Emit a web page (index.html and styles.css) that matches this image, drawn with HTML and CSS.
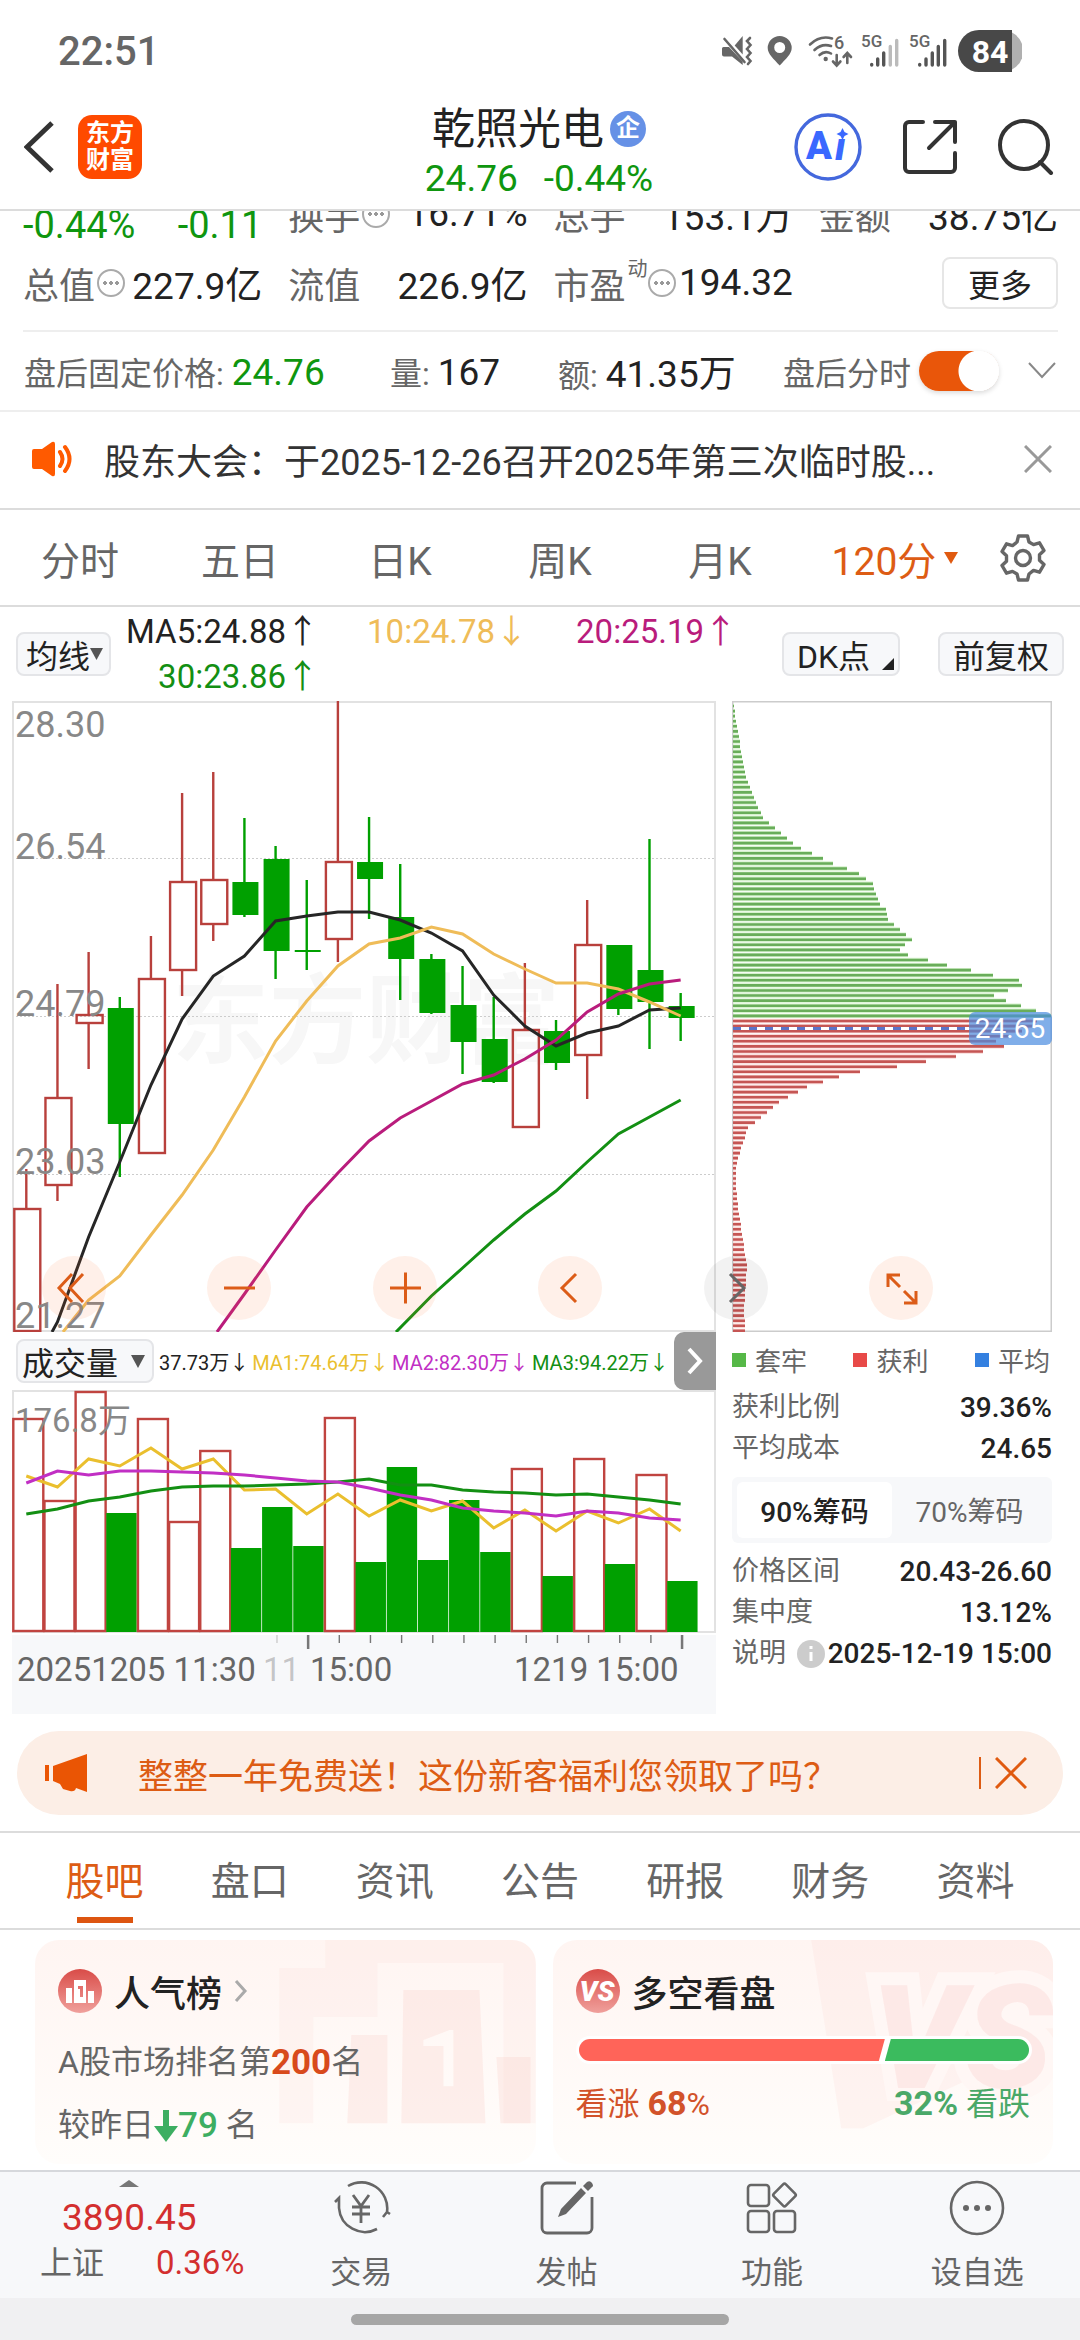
FILE: index.html
```html
<!DOCTYPE html>
<html lang="zh-CN">
<head>
<meta charset="utf-8">
<meta name="viewport" content="width=device-width, initial-scale=1">
<title>乾照光电</title>
<link rel="stylesheet" href="styles.css">
</head>
<body>
<div class="status">
  <span class="status-time">22:51</span>
  <svg class="status-icons" viewBox="0 0 302 44" aria-hidden="true">
    <g fill="#666">
      <path d="M22.700 7v18.500l-8-9z"/>
      <path d="M2 19.500q0-1.500 1.500-1.500H9l13.700 14.500V36L12 27.500H4q-2 0-2-2z"/>
      <path fill-rule="evenodd" d="M59.700 7a12 12 0 0 1 12 12c0 6-6 11-12 17.500C53.700 30 47.700 25 47.700 19a12 12 0 0 1 12-12zm0 6a5.500 5.500 0 1 0 0 11 5.500 5.500 0 0 0 0-11z"/>
      <circle cx="105.700" cy="30" r="2.200"/>
      <text x="114" y="20" font-size="18" font-weight="500">6</text>
      <text x="141" y="17.500" font-size="17" font-weight="500">5G</text>
      <text x="189" y="17.500" font-size="17" font-weight="500">5G</text>
    </g>
    <g fill="none" stroke="#666" stroke-width="2.600" stroke-linecap="round">
      <path d="M4.500 10l20 23"/>
      <path d="M30 9l-3 3 3.500 4-3.500 4 3.500 4-3.500 4 3.500 4-2.500 3"/>
      <path d="M90 15.500Q100 6 112 9.500M94.500 21Q102 14 111 17M99.500 26Q105 21 111 24.500"/>
      <path d="M116.700 26v10M113 32.500l3.700 4 3.700-4M127.300 34V24.500M123.600 28l3.700-4 3.700 4"/>
    </g>
    <g stroke="#555" stroke-width="3.400" stroke-linecap="round">
      <path d="M151.700 35.500v.5M157.700 30v6M163.700 24v12M199.700 35.500v.5M206 30v6M212.300 24v12M218.300 17.500V36M224.700 11.500V36"/>
      <path stroke="#bbb" d="M170.300 17.500V36M176.700 11.500V36"/>
    </g>
    <path fill="#484848" d="M259 1h33v42h-33a21 21 0 0 1 0-42z"/>
    <path fill="#b0b0b0" d="M292 3.500a21 21 0 0 1 0 37z"/>
    <text x="270" y="33.500" font-size="32" font-weight="700" fill="#fff" text-anchor="middle">84</text>
  </svg>
</div>

<header class="header">
  <div class="header-left">
    <button class="icon-btn" aria-label="返回">
      <svg width="32" height="54" viewBox="0 0 32 54"><path d="M28 3L3 27l25 24" fill="none" stroke="#333" stroke-width="5"/></svg>
    </button>
    <a class="logo" href="#">东方<br>财富</a>
  </div>
  <div class="title">
    <h1 class="title-name">乾照光电<span class="title-badge">企</span></h1>
    <p class="title-price"><span>24.76</span><span>-0.44%</span></p>
  </div>
  <div class="header-right">
    <button class="icon-btn" aria-label="Ai">
      <svg width="68" height="68" viewBox="0 0 68 68">
        <circle cx="34" cy="34" r="32" fill="none" stroke="#4468dd" stroke-width="3.400"/>
        <text x="12" y="46" font-size="38" font-weight="900" fill="#3a68ff">A</text>
        <text x="41" y="47" font-size="38" font-weight="900" font-style="italic" fill="#3a68ff">ı</text>
        <path fill="#3a68ff" d="M48.500 15l2 4 4 2-4 2-2 4-2-4-4-2 4-2z"/>
      </svg>
    </button>
    <button class="icon-btn" aria-label="分享">
      <svg width="56" height="56" viewBox="0 0 56 56"><path d="M21 3H7a4 4 0 0 0-4 4v42a4 4 0 0 0 4 4h42a4 4 0 0 0 4-4V34M33 3h20v20M53 3L27 29" fill="none" stroke="#333" stroke-width="4" stroke-linecap="round" stroke-linejoin="round"/></svg>
    </button>
    <button class="icon-btn" aria-label="搜索">
      <svg width="56" height="56" viewBox="0 0 56 56"><path d="M42 43l11 11" stroke="#333" stroke-width="4" stroke-linecap="round"/><circle cx="26" cy="26" r="24" fill="none" stroke="#333" stroke-width="4"/></svg>
    </button>
  </div>
</header>

<main class="main">
  <section class="quote">
    <div class="quote-grid">
      <div class="cell cell-change"><span>-0.44%</span><span>-0.11</span></div>
      <div class="cell"><span class="label">换手<i class="dots"></i></span><span>16.71%</span></div>
      <div class="cell"><span class="label">总手</span><span>153.1万</span></div>
      <div class="cell"><span class="label">金额</span><span>38.75亿</span></div>
      <div class="cell"><span class="label">总值<i class="dots"></i></span><span>227.9亿</span></div>
      <div class="cell"><span class="label">流值</span><span>226.9亿</span></div>
      <div class="cell"><span class="label">市盈<small class="label-sup">动</small><i class="dots"></i></span><span>194.32</span></div>
      <div class="cell cell-more"><button class="more">更多</button></div>
    </div>
    <div class="after">
      <span>盘后固定价格:<b class="down">24.76</b></span>
      <span>量:<b>167</b></span>
      <span>额:<b>41.35万</b></span>
      <div class="after-toggle">
        <label for="after-line">盘后分时</label>
        <input class="switch" id="after-line" type="checkbox" role="switch" checked>
        <button class="icon-btn after-open" aria-label="展开">
          <svg width="28" height="18" viewBox="0 0 28 18"><path d="M1 1l13 14L27 1" fill="none" stroke="#888" stroke-width="2"/></svg>
        </button>
      </div>
    </div>
  </section>

  <section class="notice">
    <svg width="44" height="36" viewBox="0 0 44 36" aria-hidden="true"><path fill="#ff5a00" d="M2 10q0-2 2-2h8L22 1q3-1 3 2v30q0 3-3 2l-10-7H4q-2 0-2-2z"/><path d="M30 11q5 7 0 14M35 6q9 12 0 24" fill="none" stroke="#ff5a00" stroke-width="4" stroke-linecap="round"/></svg>
    <a class="notice-text" href="#">股东大会：于2025-12-26召开2025年第三次临时股...</a>
    <button class="icon-btn" aria-label="关闭公告">
      <svg width="28" height="28" viewBox="0 0 28 28"><path d="M1 1l26 26M27 1L1 27" stroke="#999" stroke-width="3"/></svg>
    </button>
  </section>

  <nav class="periods">
    <button class="period">分时</button>
    <button class="period">五日</button>
    <button class="period">日K</button>
    <button class="period">周K</button>
    <button class="period">月K</button>
    <button class="period period-on">120分<svg width="14" height="12" viewBox="0 0 14 12"><path fill="#e05a10" d="M0 0h14L7 12z"/></svg></button>
    <button class="period period-set" aria-label="设置">
      <svg width="50" height="50" viewBox="0 0 50 50"><g fill="none" stroke="#666" stroke-width="3.400" stroke-linejoin="round"><path d="M20.500 3h9l1.500 6 4.500 2.600 6-1.800 4.500 7.700-4.500 4.300v5.400l4.500 4.300-4.500 7.700-6-1.800L31 41l-1.500 6h-9L19 41l-4.500-2.600-6 1.800L4 32.500l4.500-4.300v-5.400L4 18.500l4.500-7.700 6 1.800L19 9z"/><circle cx="25" cy="25" r="7.500"/></g></svg>
    </button>
  </nav>

  <section class="ma">
    <button class="chip">均线<svg width="13" height="12" viewBox="0 0 13 12"><path fill="#555" d="M0 0h13L6.500 12z"/></svg></button>
    <div class="ma-values">
      <span class="c-black">MA5:24.88↑</span>
      <span class="c-yellow">10:24.78↓</span>
      <span class="c-magenta">20:25.19↑</span>
      <span class="c-green">30:23.86↑</span>
    </div>
    <button class="chip chip-dk">DK点<svg width="12" height="12" viewBox="0 0 12 12"><path fill="#222" d="M12 0v12H0z"/></svg></button>
    <button class="chip">前复权</button>
  </section>

  <section class="charts">
    <div class="charts-main">
      <svg class="chart" id="candles" viewBox="12 701 704 631" role="img" aria-label="120分K线">
        <text x="172" y="1055" font-size="97" font-weight="700" fill="#f7f7f7">东方财富</text>
        <g stroke="#ccc" stroke-dasharray="2 2"><path d="M12 858.500h704M12 1016.500h704M12 1174.500h704"/></g>
        <path d="M13 702h702v629H13z" fill="none" stroke="#e2e2e2" stroke-width="2"/>
        <g id="candle-layer"></g>
        <g class="axis">
          <text x="15" y="737">28.30</text>
          <text x="15" y="859">26.54</text>
          <text x="15" y="1016">24.79</text>
          <text x="15" y="1174">23.03</text>
          <text x="15" y="1328">21.27</text>
        </g>
      </svg>
      <div class="volbar">
        <button class="chip chip-vol">成交量<svg width="14" height="13" viewBox="0 0 14 13"><path fill="#555" d="M0 0h14L7 13z"/></svg></button>
        <div class="vol-values">
          <span class="c-black">37.73万↓</span>
          <span class="c-gold">MA1:74.64万↓</span>
          <span class="c-violet">MA2:82.30万↓</span>
          <span class="c-green">MA3:94.22万↓</span>
        </div>
        <button class="vol-next" aria-label="下一指标">
          <svg width="16" height="28" viewBox="0 0 16 28"><path d="M2 2l11 12L2 26" fill="none" stroke="#fff" stroke-width="4"/></svg>
        </button>
      </div>
      <svg class="chart" id="volumes" viewBox="12 1390 704 243" role="img" aria-label="成交量">
        <path d="M13 1391h702v241H13z" fill="none" stroke="#e2e2e2" stroke-width="2"/>
        <g id="volume-layer"></g>
        <text class="axis-small" x="15" y="1432">176.8万</text>
      </svg>
      <svg class="chart timeline" viewBox="12 1635 704 79" role="img" aria-label="时间轴">
        <path fill="#f7f8fa" d="M12 1635h704v79H12z"/>
        <g id="tick-layer"></g>
        <text x="17" y="1681">20251205 11:30</text>
        <text x="263" y="1681" fill-opacity=".35">11</text>
        <text x="310" y="1681">15:00</text>
        <text x="514" y="1681">1219 15:00</text>
      </svg>
    </div>

    <div class="charts-side">
      <svg class="chart" viewBox="732 701 320 631" role="img" aria-label="筹码分布">
        <path d="M732.500 701.500h319v630h-319z" fill="none" stroke="#ccc" stroke-width="2"/>
        <g id="chip-layer"></g>
        <path d="M733 1028.500h236" stroke="#fff" stroke-width="3"/>
        <path d="M733 1028.500h236" stroke="#5a74c8" stroke-width="3" stroke-dasharray="8 8"/>
        <rect x="969" y="1012" width="83" height="33" rx="6" fill="#4a8be0" fill-opacity=".7"/>
        <text x="1010" y="1038" font-size="28" fill="#fff" text-anchor="middle">24.65</text>
      </svg>
      <ul class="legend">
        <li><i class="key key-green"></i>套牢</li>
        <li><i class="key key-red"></i>获利</li>
        <li><i class="key key-blue"></i>平均</li>
      </ul>
      <dl class="stats">
        <div><dt>获利比例</dt><dd>39.36%</dd></div>
        <div><dt>平均成本</dt><dd>24.65</dd></div>
      </dl>
      <div class="segment">
        <button class="segment-item segment-on">90%筹码</button>
        <button class="segment-item">70%筹码</button>
      </div>
      <dl class="stats">
        <div><dt>价格区间</dt><dd>20.43-26.60</dd></div>
        <div><dt>集中度</dt><dd>13.12%</dd></div>
        <div><dt>说明</dt><dd><svg width="28" height="28" viewBox="0 0 28 28" aria-hidden="true"><circle cx="14" cy="14" r="14" fill="#ccc"/><path d="M14 6v3M14 12v9" stroke="#fff" stroke-width="3"/></svg>2025-12-19 15:00</dd></div>
      </dl>
    </div>

    <div class="controls">
      <button class="control" aria-label="最左"><svg viewBox="0 0 64 64"><path d="M30 18L17 32l13 14M41 18L28 32l13 14"/></svg></button>
      <button class="control" aria-label="缩小"><svg viewBox="0 0 64 64"><path d="M17 32h31"/></svg></button>
      <button class="control" aria-label="放大"><svg viewBox="0 0 64 64"><path d="M17 32h31M32.500 16.500v31"/></svg></button>
      <button class="control" aria-label="左移"><svg viewBox="0 0 64 64"><path d="M38 18L24 32l14 14"/></svg></button>
      <button class="control control-off" aria-label="右移"><svg viewBox="0 0 64 64"><path d="M26 18l14 14-14 14"/></svg></button>
      <button class="control" aria-label="全屏"><svg viewBox="0 0 64 64"><path d="M31 19H19v12M19 19l12 12M35 47h12V35M47 47L35 35"/></svg></button>
    </div>
  </section>

  <section class="promo">
    <svg width="44" height="40" viewBox="0 0 44 40" aria-hidden="true"><path fill="#ea5504" d="M0 12h4v16H0zM8 13L42 1v38l-11-4q-1 4-6 3l-7-2-3-5-7-3z"/></svg>
    <a class="promo-text" href="#">整整一年免费送！这份新客福利您领取了吗？</a>
    <button class="promo-close" aria-label="关闭活动">
      <svg width="32" height="32" viewBox="0 0 32 32"><path d="M1 1l30 30M31 1L1 31" stroke="#e05a10" stroke-width="3"/></svg>
    </button>
  </section>

  <nav class="tabs">
    <a class="tab tab-on" href="#">股吧</a>
    <a class="tab" href="#">盘口</a>
    <a class="tab" href="#">资讯</a>
    <a class="tab" href="#">公告</a>
    <a class="tab" href="#">研报</a>
    <a class="tab" href="#">财务</a>
    <a class="tab" href="#">资料</a>
  </nav>

  <section class="cards">
    <article class="card">
      <svg class="card-art" viewBox="0 0 500 224" aria-hidden="true">
        <path fill="#fbdcd8" fill-opacity=".2" fill-rule="evenodd" d="M244 28h46V0h210v183H244zM278 183h190V23H342v54h-64z"/>
        <path fill="#f9cfcb" fill-opacity=".3" fill-rule="evenodd" d="M368 50h76l6 133h-84zM388 100l26-10h4v56h-10v-40h-20zM316 95h36v88h-40zM461 117h34v66h-30z"/>
      </svg>
      <h2 class="card-title">
        <svg width="44" height="44" viewBox="0 0 44 44" aria-hidden="true"><defs><linearGradient id="red" x2="0" y2="1"><stop stop-color="#d94c48"/><stop offset="1" stop-color="#f0a09c"/></linearGradient></defs><circle cx="22" cy="22" r="22" fill="url(#red)"/><path fill="#fff" fill-rule="evenodd" d="M16 11h12v23H16zM20 17v3h2v8h3V17zM8 19h6v15H8zM30 22h6v12h-6z"/></svg>
        人气榜
        <svg width="14" height="24" viewBox="0 0 14 24" aria-hidden="true"><path d="M2 2l9 10-9 10" fill="none" stroke="#aaa" stroke-width="3"/></svg>
      </h2>
      <p class="card-line">A股市场排名第<b class="rank">200</b>名</p>
      <p class="card-line">较昨日<svg width="24" height="32" viewBox="0 0 24 32" aria-label="下降"><path fill="#3dae62" d="M9 0h6v16h9L12 32 0 16h9z"/></svg><b class="fall">79</b> 名</p>
    </article>
    <article class="card">
      <svg class="card-art" viewBox="0 0 500 224" aria-hidden="true">
        <path fill="#fbdcd8" fill-opacity=".25" d="M258 0h242v100l-190 88h-22z"/>
        <text x="318" y="148" font-size="145" font-weight="900" font-style="italic" fill="#fad4d1" fill-opacity=".4" stroke="#fff7f5" stroke-width="26" paint-order="stroke">VS</text>
      </svg>
      <h2 class="card-title">
        <svg width="44" height="44" viewBox="0 0 44 44" aria-hidden="true"><circle cx="22" cy="22" r="22" fill="url(#red)"/><text x="21" y="32" font-size="28" font-weight="900" font-style="italic" fill="#fff" text-anchor="middle">VS</text></svg>
        多空看盘
      </h2>
      <div class="poll"><div class="poll-up" style="width:68%"></div><div class="poll-down"></div></div>
      <p class="poll-text"><span class="poll-rise">看涨 <b>68</b>%</span><span class="poll-fall"><b>32%</b> 看跌</span></p>
    </article>
  </section>
</main>

<nav class="dock">
  <a class="index" href="#">
    <svg width="20" height="7" viewBox="0 0 20 7" aria-hidden="true"><path fill="#777" d="M10 0l10 7H0z"/></svg>
    <span class="index-value">3890.45</span>
    <span class="index-row"><span class="index-name">上证</span><span>0.36%</span></span>
  </a>
  <a class="dock-item" href="#">
    <svg width="60" height="56" viewBox="0 0 60 56" aria-hidden="true"><g fill="none" stroke="#666" stroke-width="2.600"><path d="M17 6A26 26 0 0 1 56 32l-4 5M4 22l4-4v10A26 26 0 0 0 46 49M56 32l3 2"/></g><path d="M22 15l8 11 8-11M21 27h18M21 34h18M30 26v17" fill="none" stroke="#666" stroke-width="2.800"/></svg>
    交易
  </a>
  <a class="dock-item" href="#">
    <svg width="56" height="56" viewBox="0 0 56 56" aria-hidden="true"><path d="M37 3H8a5 5 0 0 0-5 5v40a5 5 0 0 0 5 5h40a5 5 0 0 0 5-5V17" fill="none" stroke="#666" stroke-width="2.800"/><path fill="#666" d="M42 8l5 5-20 21-8 3 3-8zM44 6l4-4q3-2 5 1t0 4l-4 4z"/></svg>
    发帖
  </a>
  <a class="dock-item" href="#">
    <svg width="56" height="56" viewBox="0 0 56 56" aria-hidden="true"><g fill="none" stroke="#666" stroke-width="2.600"><rect x="4" y="5" width="21" height="21" rx="3"/><rect x="4" y="31" width="21" height="21" rx="3"/><rect x="30" y="31" width="21" height="21" rx="3"/><rect x="32" y="6.500" width="17" height="17" rx="2" transform="rotate(45 40.500 15)"/></g></svg>
    功能
  </a>
  <a class="dock-item" href="#">
    <svg width="56" height="56" viewBox="0 0 56 56" aria-hidden="true"><circle cx="28" cy="28" r="26" fill="none" stroke="#666" stroke-width="2.600"/><g fill="#666"><circle cx="17" cy="28" r="3"/><circle cx="28" cy="28" r="3"/><circle cx="39" cy="28" r="3"/></g></svg>
    设自选
  </a>
</nav>
<div class="gesture"><span class="gesture-bar"></span></div>
<script src="script.js"></script>
</body>
</html>
```

FILE: styles.css
```css
* { box-sizing: border-box; }

body {
  margin: 0;
  min-height: 100vh;
  display: flex;
  flex-direction: column;
  background: #fff;
  color: #222;
  font-family: Roboto, "Noto Sans CJK SC", sans-serif;
  font-size: 36px;
}

h1, h2, p, ul, dl, dd { margin: 0; padding: 0; }
ul { list-style: none; }
a { color: inherit; text-decoration: none; }
svg { display: block; flex: none; }
button {
  padding: 0;
  border: 0;
  background: none;
  color: inherit;
  font: inherit;
}

.icon-btn { display: flex; }

.c-black { color: #222; }
.c-yellow { color: #efbc58; }
.c-magenta { color: #b91c7c; }
.c-green { color: #138f13; }
.c-gold { color: #eabf2e; }
.c-violet { color: #c12fc4; }

/* status bar */
.status {
  height: 84px;
  padding: 18px 58px 0;
  display: flex;
  align-items: center;
  justify-content: space-between;
}
.status-time { font-size: 40px; font-weight: 500; color: #666; }
.status-icons { width: 302px; height: 44px; }

/* header */
.header {
  height: 127px;
  padding: 0 26px 0 24px;
  display: grid;
  grid-template-columns: 1fr auto 1fr;
  align-items: center;
  border-bottom: 2px solid #dcdcdc;
}
.header-left { display: flex; align-items: center; gap: 22px; }
.logo {
  width: 64px;
  height: 64px;
  padding-top: 5px;
  border-radius: 14px;
  background: #ff4a00;
  color: #fff;
  font-size: 24px;
  font-weight: 700;
  line-height: 27px;
  text-align: center;
}
.title { padding-top: 12px; }
.title-name {
  display: flex;
  align-items: center;
  justify-content: center;
  gap: 6px;
  font-size: 43px;
  font-weight: 400;
  line-height: 52px;
}
.title-badge {
  width: 36px;
  height: 36px;
  border-radius: 50%;
  background: #6691e6;
  color: #fff;
  font-size: 24px;
  font-weight: 700;
  line-height: 34px;
  text-align: center;
}
.title-price {
  display: flex;
  justify-content: center;
  gap: 26px;
  color: #0f960f;
  font-size: 37px;
  line-height: 48px;
}
.header-right { display: flex; align-items: center; justify-content: flex-end; gap: 40px; }

.main { flex: 1; }

/* quote numbers */
.quote { overflow: hidden; border-bottom: 2px solid #eee; }
.quote-grid {
  margin: -32px 22px 0 23px;
  padding-bottom: 13px;
  display: grid;
  grid-template-columns: repeat(4, 1fr);
  column-gap: 26px;
  border-bottom: 2px solid #eee;
}
.cell {
  height: 69px;
  display: flex;
  align-items: center;
  justify-content: space-between;
  font-size: 37px;
  white-space: nowrap;
}
.cell-change { padding-top: 22px; color: #0f960f; font-size: 38px; }
.cell-more { justify-content: flex-end; }
.label { display: flex; align-items: center; gap: 2px; color: #666; font-size: 36px; }
.label-sup { align-self: flex-start; margin-right: -2px; font-size: 20px; line-height: 24px; }
.dots {
  width: 28px;
  height: 28px;
  border: 2px solid #aaa;
  border-radius: 50%;
  background:
    radial-gradient(circle at 6px 12px, #999 2px, transparent 2px),
    radial-gradient(circle at 12px 12px, #999 2px, transparent 2px),
    radial-gradient(circle at 18px 12px, #999 2px, transparent 2px);
}
.more {
  width: 116px;
  height: 52px;
  border: 2px solid #e6e6e6;
  border-radius: 8px;
  font-size: 32px;
}
.after {
  height: 78px;
  padding: 0 24px;
  display: grid;
  grid-template-columns: 366fr 168fr 225fr 273fr;
  align-items: center;
  color: #666;
  font-size: 32px;
  white-space: nowrap;
}
.after b { margin-left: 8px; color: #222; font-size: 37px; font-weight: 400; }
.after .down { color: #0f960f; }
.after-toggle { display: flex; align-items: center; }
.switch {
  appearance: none;
  width: 80px;
  height: 40px;
  margin: 0 0 0 8px;
  border-radius: 20px;
  background: radial-gradient(circle at 60px 20px, #fff 20px, #e9560a 21px);
  box-shadow: 0 2px 5px rgba(0, 0, 0, .15);
}
.after-open { margin-left: auto; }

/* announcement */
.notice {
  height: 98px;
  padding: 0 28px 2px 30px;
  display: flex;
  align-items: center;
  border-bottom: 2px solid #dcdcdc;
}
.notice-text { flex: 1; margin-left: 30px; color: #333; white-space: nowrap; }

/* chart periods */
.periods {
  height: 97px;
  display: grid;
  grid-template-columns: repeat(5, 160fr) 190fr 90fr;
  border-bottom: 2px solid #dcdcdc;
  color: #666;
  font-size: 39px;
}
.period { display: flex; align-items: center; justify-content: center; gap: 8px; }
.period-on { color: #dd5c14; }
.period-set { justify-content: flex-start; padding-left: 8px; }

/* moving average row */
.ma {
  height: 94px;
  padding: 0 16px;
  display: flex;
  align-items: center;
}
.chip {
  height: 44px;
  padding: 0 13px;
  display: flex;
  align-items: center;
  border: 2px solid #e4e5e8;
  border-radius: 8px;
  background: #f7f8fa;
  color: #222;
  font-size: 32px;
  white-space: nowrap;
}
.ma .chip:first-child { padding: 0 6px 0 8px; }
.ma-values {
  margin: 0 auto 0 15px;
  display: grid;
  grid-template-columns: repeat(3, auto);
  column-gap: 48px;
  font-size: 33px;
  line-height: 45px;
  text-align: right;
  white-space: nowrap;
}
.chip-dk { margin-right: 38px; padding-right: 4px; gap: 12px; }
.chip-dk svg { align-self: flex-end; margin-bottom: 4px; }

/* charts */
.charts {
  position: relative;
  padding: 0 28px 0 12px;
  display: grid;
  grid-template-columns: minmax(0, 704fr) minmax(0, 320fr);
  column-gap: 16px;
}
.chart { width: 100%; height: auto; }
.axis { fill: #888; font-size: 36px; }
.axis-small { fill: #888; font-size: 33px; }
.timeline { margin-top: 2px; fill: #666; font-size: 33px; }
.volbar { height: 58px; display: flex; align-items: center; }
.chip-vol { flex: none; margin-left: 4px; padding: 0 7px 0 4px; gap: 13px; }
.vol-values {
  flex: 1;
  padding: 0 5px;
  display: flex;
  justify-content: space-between;
  font-size: 20px;
  white-space: nowrap;
}
.vol-next {
  width: 42px;
  height: 58px;
  display: flex;
  align-items: center;
  justify-content: center;
  border-radius: 10px 0 0 10px;
  background: #999;
}
.controls {
  position: absolute;
  top: 555px;
  left: 42px;
  right: 147px;
  display: flex;
  justify-content: space-between;
}
.control {
  width: 64px;
  height: 64px;
  border-radius: 50%;
  background: rgba(255, 110, 40, .1);
}
.control svg { fill: none; stroke: #dc5c18; stroke-width: 3; }
.control-off { background: rgba(0, 0, 0, .05); }
.control-off svg { stroke: #666; }

.legend {
  height: 55px;
  padding-right: 2px;
  display: flex;
  align-items: center;
  justify-content: space-between;
  color: #666;
  font-size: 26px;
}
.legend li { display: flex; align-items: center; gap: 9px; }
.key { width: 14px; height: 14px; }
.key-green { background: #56b847; }
.key-red { background: #e84a48; }
.key-blue { background: #3480e0; }
.stats div {
  display: flex;
  align-items: center;
  justify-content: space-between;
  line-height: 41px;
  white-space: nowrap;
}
.stats dt { color: #666; font-size: 27px; }
.stats dd { display: flex; align-items: center; gap: 3px; font-size: 28px; font-weight: 500; }
.segment {
  height: 66px;
  margin: 8px 0;
  padding: 5px;
  display: grid;
  grid-template-columns: 1fr 1fr;
  border-radius: 6px;
  background: #f7f8fa;
}
.segment-item { border-radius: 6px; color: #666; font-size: 28px; }
.segment-on { background: #fff; color: #222; font-weight: 500; }

/* promotion */
.promo {
  height: 84px;
  margin: 17px 17px 16px;
  padding: 0 36px 0 28px;
  display: flex;
  align-items: center;
  border-radius: 42px;
  background: #fceee6;
  color: #dd5c14;
}
.promo-text { flex: 1; margin-left: 49px; font-size: 35px; white-space: nowrap; }
.promo-close { padding-left: 14px; border-left: 2px solid #dd5c14; }

/* section tabs */
.tabs {
  height: 99px;
  padding: 0 32px;
  display: grid;
  grid-template-columns: repeat(7, 1fr);
  justify-items: center;
  border-top: 2px solid #dcdcdc;
  border-bottom: 2px solid #dcdcdc;
  color: #666;
  font-size: 39px;
  line-height: 98px;
}
.tab-on {
  background: linear-gradient(#dd5510, #dd5510) center bottom 8px / 56px 6px no-repeat;
  color: #dd5c14;
}

/* cards */
.cards {
  padding: 10px 27px 6px 35px;
  display: grid;
  grid-template-columns: 1fr 1fr;
  gap: 17px;
}
.card {
  position: relative;
  height: 224px;
  padding: 24px 23px 0;
  overflow: hidden;
  border-radius: 24px;
  background: linear-gradient(#fff5f2, #fffdfb);
}
.card > * { position: relative; }
.card .card-art { position: absolute; top: 0; left: 0; width: 100%; }
.card-title {
  height: 54px;
  margin-bottom: 13px;
  display: flex;
  align-items: center;
  gap: 12px;
  font-size: 36px;
  font-weight: 500;
}
.card-line { display: flex; align-items: center; color: #666; font-size: 32px; line-height: 63px; white-space: pre; }
.card-line b { font-size: 35px; }
.rank { color: #d84a1c; }
.fall { color: #3dae62; font-weight: 500; }
.poll {
  margin: 21px 1px 17px 3px;
  display: flex;
  height: 22px;
  border-radius: 11px;
  overflow: hidden;
  outline: 3px solid #fff;
  background: #fff;
}
.poll-up { background: #ff6459; clip-path: polygon(0 0, 100% 0, calc(100% - 6px) 100%, 0 100%); }
.poll-down { flex: 1; background: #3bbb5e; clip-path: polygon(6px 0, 100% 0, 100% 100%, 0 100%); }
.poll-text { display: flex; justify-content: space-between; font-size: 32px; line-height: 50px; }
.poll-text b { font-size: 34px; }
.poll-rise { color: #d2522a; }
.poll-fall { color: #4aa868; }

/* bottom dock */
.dock {
  height: 128px;
  display: grid;
  grid-template-columns: 258fr repeat(4, 205fr);
  border-top: 2px solid #d6d8dc;
  background: #f7f8fa;
  color: #666;
  font-size: 31px;
}
.dock-item {
  padding-top: 8px;
  display: flex;
  flex-direction: column;
  align-items: center;
  gap: 15px;
  line-height: 44px;
}
.index {
  padding-top: 8px;
  display: flex;
  flex-direction: column;
  align-items: center;
  color: #d32f2f;
}
.index-value { margin-top: 6px; font-size: 37px; line-height: 50px; }
.index-row { width: 100%; padding: 0 14px 0 40px; display: flex; justify-content: space-between; font-size: 33px; line-height: 40px; }
.index-name { color: #666; font-size: 32px; }
.gesture {
  height: 42px;
  display: flex;
  align-items: center;
  justify-content: center;
  background: #f0f0f2;
}
.gesture-bar { width: 35%; height: 11px; border-radius: 6px; background: #a6a6a6; }
```

FILE: script.js
```js
const NS = 'http://www.w3.org/2000/svg';
const RED = '#b8403c';
const GREEN = '#00a000';
const STEP = 31.16;
const slot = i => 26.3 + STEP * i;

function add(parent, tag, attrs) {
  const el = document.createElementNS(NS, tag);
  for (const key in attrs) el.setAttribute(key, attrs[key]);
  parent.appendChild(el);
}

function line(parent, color, start, first, ys) {
  const points = ys.map((y, i) => `${slot(first + i)},${y}`);
  if (start) points.unshift(start);
  add(parent, 'polyline', { points: points.join(' '), fill: 'none', stroke: color, 'stroke-width': 3 });
}

// colour, high, body top, body bottom, low
const candles = [
  ['r', 1169, 1209, 1331, 1331], ['r', 984, 1098, 1185, 1201], ['r', 952, 1015, 1023, 1069],
  ['g', 997, 1008, 1124, 1177], ['r', 936, 979, 1153, 1153], ['r', 793, 882, 970, 996],
  ['r', 772, 880, 924, 941], ['g', 818, 882, 915, 917], ['g', 846, 859, 951, 979],
  ['g', 880, 950, 952, 970], ['r', 701, 862, 939, 962], ['g', 817, 862, 879, 919],
  ['g', 864, 917, 959, 1000], ['g', 954, 959, 1013, 1014], ['g', 966, 1005, 1042, 1074],
  ['g', 997, 1039, 1082, 1083], ['r', 963, 1030, 1127, 1127], ['g', 1020, 1031, 1063, 1070],
  ['r', 900, 945, 1055, 1099], ['g', 945, 945, 1009, 1015], ['g', 839, 970, 1002, 1049],
  ['g', 993, 1006, 1018, 1041]
];
const candleLayer = document.getElementById('candle-layer');
candles.forEach(([side, high, top, bottom, low], i) => {
  const x = slot(i);
  const color = side === 'r' ? RED : GREEN;
  add(candleLayer, 'path', { d: `M${x} ${high}V${top}M${x} ${bottom}V${low}`, stroke: color, 'stroke-width': 2.4 });
  add(candleLayer, 'rect', side === 'r'
    ? { x: x - 12, y: top, width: 26, height: bottom - top, fill: 'none', stroke: color, 'stroke-width': 2.4 }
    : { x: x - 12, y: top, width: 26, height: bottom - top, fill: color });
});
line(candleLayer, '#262626', '52,1332', 1, [1322, 1237, 1162, 1085, 1019, 976, 956, 921, 916, 912, 912, 920, 933, 951, 995, 1026, 1046, 1033, 1026, 1010, 1008]);
line(candleLayer, '#efbc58', '63,1332', 2, [1300, 1276, 1235, 1195, 1150, 1097, 1041, 1001, 966, 944, 938, 927, 934, 954, 969, 983, 983, 989, 1002, 1016]);
line(candleLayer, '#b91c7c', '217,1332', 7, [1294, 1250, 1207, 1173, 1141, 1118, 1101, 1084, 1075, 1059, 1040, 1012, 994, 984, 980]);
line(candleLayer, '#138f13', '396,1332', 13, [1296, 1268, 1240, 1214, 1191, 1162, 1134, 1117, 1100]);

const volumes = [
  ['r', 1419], ['r', 1501], ['r', 1392], ['g', 1513], ['r', 1419], ['r', 1522], ['r', 1451], ['g', 1548],
  ['g', 1507], ['g', 1546], ['r', 1418], ['g', 1562], ['g', 1467], ['g', 1560], ['g', 1500], ['g', 1552],
  ['r', 1469], ['g', 1576], ['r', 1459], ['g', 1564], ['r', 1475], ['g', 1581]
];
const volumeLayer = document.getElementById('volume-layer');
volumes.forEach(([side, top], i) => {
  const x = slot(i) - 13.5;
  add(volumeLayer, 'rect', side === 'r'
    ? { x: x + 0.5, y: top, width: 30, height: 1631 - top, fill: 'none', stroke: '#c04440', 'stroke-width': 2.4 }
    : { x, y: top, width: 30.4, height: 1632 - top, fill: GREEN });
});
line(volumeLayer, '#eabf2e', '', 0, [1476, 1487, 1459, 1466, 1448, 1469, 1459, 1490, 1489, 1514, 1494, 1516, 1500, 1511, 1501, 1528, 1510, 1531, 1511, 1523, 1509, 1531]);
line(volumeLayer, '#138f13', '', 0, [1514, 1509, 1501, 1497, 1491, 1487, 1486, 1486, 1485, 1484, 1482, 1479, 1485, 1485, 1490, 1492, 1493, 1495, 1494, 1497, 1500, 1504]);
line(volumeLayer, '#c12fc4', '', 0, [1483, 1471, 1475, 1471, 1471, 1472, 1473, 1475, 1478, 1481, 1482, 1488, 1495, 1500, 1508, 1511, 1513, 1516, 1511, 1513, 1518, 1520]);

const tickLayer = document.getElementById('tick-layer');
for (let i = 8; i < 22; i++) {
  const major = i === 9 || i === 21;
  const x = slot(i) + 1.4;
  add(tickLayer, 'path', { d: `M${x} 1635v${major ? 14 : 8}`, stroke: i === 8 ? '#ccc' : '#777', 'stroke-width': major ? 2.5 : 1.4 });
}

// cost distribution, one bar per price level
const trapped = [1, 2, 2, 3, 4, 5, 6, 7, 7, 8, 9, 10, 11, 12, 13, 15, 17, 19, 21, 23, 25, 28, 30, 36, 42, 48, 54, 60, 68, 79, 90, 100, 114, 126, 133, 140, 141, 143, 145, 147, 153, 154, 155, 161, 167, 173, 179, 172, 167, 175, 195, 214, 238, 260, 286, 289, 275, 261, 273, 288, 303, 318];
const profit = [304, 301, 289, 276, 263, 271, 250, 223, 193, 164, 127, 106, 90, 74, 65, 55, 46, 40, 34, 28, 22, 15, 13, 12, 10, 8, 7, 5, 4, 3, 3, 3, 3, 3, 4, 4, 5, 5, 6, 7, 8, 8, 9, 10, 11, 11, 12, 13, 14, 14, 13, 13, 13, 12, 12, 12, 11, 11, 11, 12, 12, 12];
const chipLayer = document.getElementById('chip-layer');
const bars = (list, from, color, tint) => {
  const rows = list.map((w, i) => `M733 ${(from + i * 5.08).toFixed(2)}h${w}`).join('');
  add(chipLayer, 'path', { d: rows, stroke: tint, 'stroke-width': 4.4 });
  add(chipLayer, 'path', { d: rows, stroke: color, 'stroke-width': 2.6 });
};
bars(trapped, 706, '#69ad5a', '#d6f2cd');
bars(profit, 1021, '#c55654', '#fadad8');
```
